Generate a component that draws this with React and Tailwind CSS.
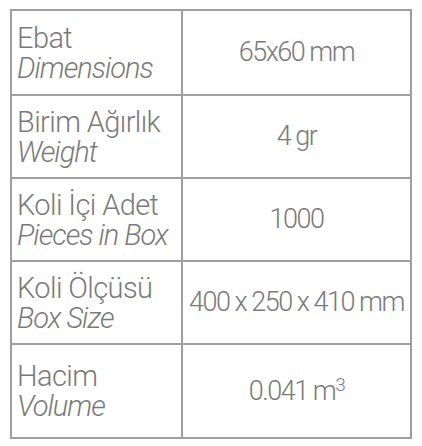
import React from "react";

const rows = [
  { tr: "Ebat", en: "Dimensions", val: <>65x60 mm</>, h: "h-[83px]" },
  { tr: "Birim Ağırlık", en: "Weight", val: <>4 gr</>, h: "h-[83px]" },
  { tr: "Koli İçi Adet", en: "Pieces in Box", val: <>1000</>, h: "h-[83px]" },
  { tr: "Koli Ölçüsü", en: "Box Size", val: <>400 x 250 x 410 mm</>, h: "h-[83px]" },
  {
    tr: "Hacim",
    en: "Volume",
    val: (
      <>
        0.041 m<sup className="text-[19px] relative top-[-9px] align-baseline leading-none">3</sup>
      </>
    ),
    h: "h-[94px]",
  },
];

export default function App() {
  return (
    <div
      className="w-[422px] h-[446px] bg-white pt-[9px] pl-[10px]"
      style={{ fontFamily: "Roboto, 'Liberation Sans', sans-serif" }}
    >
      <div className="w-[402px] border-2 border-[#9f9f9f] flex flex-col">
        {rows.map((r, i) => (
          <div
            key={i}
            className={`flex ${r.h} ${i > 0 ? "border-t-2 border-[#9f9f9f]" : ""}`}
          >
            <div className="w-[171px] shrink-0 border-r-2 border-[#9f9f9f] pl-[5px] flex flex-col justify-center text-[#7a7a7a] font-light text-[29px] leading-[30px]">
              <div className="tracking-[-0.6px]">{r.tr}</div>
              <div className="italic tracking-[-1px]">{r.en}</div>
            </div>
            <div className="flex-1 flex items-center justify-center text-[#7a7a7a] font-light text-[27px] tracking-[-1.5px]">
              <span>{r.val}</span>
            </div>
          </div>
        ))}
      </div>
    </div>
  );
}
